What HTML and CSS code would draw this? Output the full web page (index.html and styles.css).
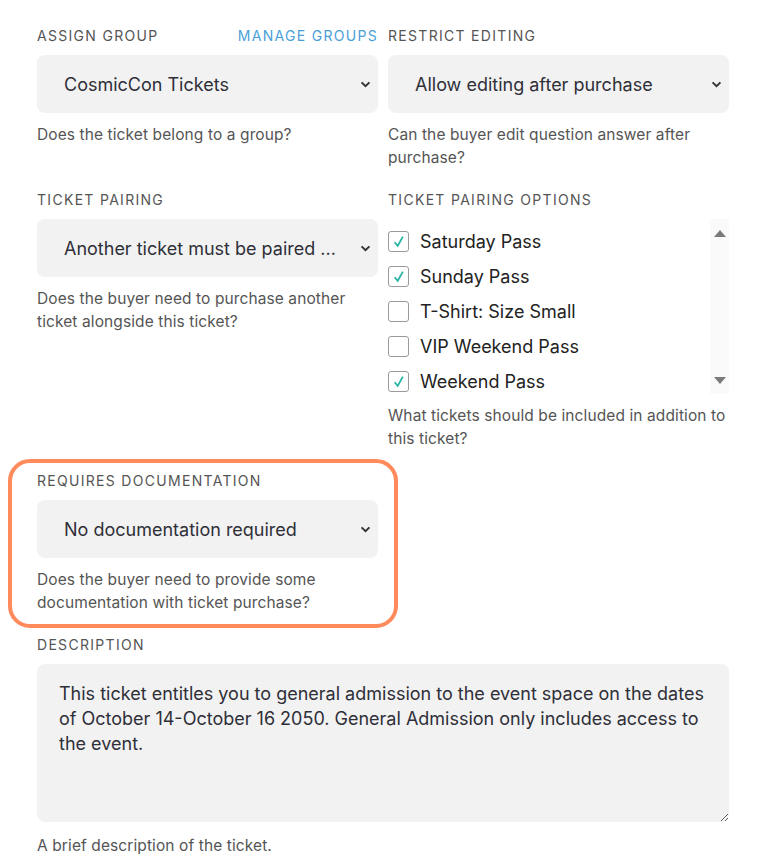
FILE: index.html
```html
<!DOCTYPE html>
<html lang="en">
<head>
    <meta charset="UTF-8">
    <meta name="viewport" content="width=device-width, initial-scale=1.0">
    <title>Ticket settings</title>
    <link rel="stylesheet" href="styles.css">
</head>
<body>

<div class="form">
    <!-- Assign group -->
    <div class="field">
        <div class="label-row">
            <span class="label">Assign Group</span>
            <a class="link" href="#">Manage Groups</a>
        </div>
        <div class="select">CosmicCon Tickets</div>
        <p class="help">Does the ticket belong to a group?</p>
    </div>

    <!-- Restrict editing -->
    <div class="field">
        <div class="label-row">
            <span class="label">Restrict Editing</span>
        </div>
        <div class="select">Allow editing after purchase</div>
        <p class="help">Can the buyer edit question answer after purchase?</p>
    </div>

    <!-- Ticket pairing -->
    <div class="field">
        <div class="label-row">
            <span class="label">Ticket Pairing</span>
        </div>
        <div class="select">Another ticket must be paired ...</div>
        <p class="help">Does the buyer need to purchase another ticket alongside this ticket?</p>
    </div>

    <!-- Pairing options -->
    <div class="field">
        <div class="label-row">
            <span class="label">Ticket Pairing Options</span>
        </div>
        <div class="checklist">
            <ul class="options">
                <li class="option checked"><span class="box"></span>Saturday Pass</li>
                <li class="option checked"><span class="box"></span>Sunday Pass</li>
                <li class="option"><span class="box"></span>T-Shirt: Size Small</li>
                <li class="option"><span class="box"></span>VIP Weekend Pass</li>
                <li class="option checked"><span class="box"></span>Weekend Pass</li>
            </ul>
            <div class="scrollbar">
                <span class="arrow up"></span>
                <span class="arrow down"></span>
            </div>
        </div>
        <p class="help">What tickets should be included in addition to this ticket?</p>
    </div>

    <!-- Requires documentation (highlighted) -->
    <div class="field highlight">
        <div class="label-row">
            <span class="label">Requires Documentation</span>
        </div>
        <div class="select">No documentation required</div>
        <p class="help">Does the buyer need to provide some documentation with ticket purchase?</p>
    </div>
    <div></div>

    <!-- Description -->
    <div class="field wide">
        <div class="label-row">
            <span class="label">Description</span>
        </div>
        <textarea class="textarea">This ticket entitles you to general admission to the event space on the dates of October 14-October 16 2050. General Admission only includes access to the event.</textarea>
        <p class="help">A brief description of the ticket.</p>
    </div>
</div>

</body>
</html>
```

FILE: styles.css
```css
* {
    box-sizing: border-box;
}
body {
    margin: 0;
    background-color: #fff;
    font-family: Inter, "Noto Sans", sans-serif;
    color: #333;
}
.form {
    width: 692px;
    margin-left: 37px;
    padding-top: 25px;
    display: grid;
    grid-template-columns: 1fr 1fr;
    column-gap: 10px;
    row-gap: 20px;
}
.field.wide {
    grid-column: span 2;
}
.label-row {
    display: flex;
    justify-content: space-between;
    align-items: center;
    height: 20px;
    margin-bottom: 10px;
}
.label {
    font-size: 14px;
    letter-spacing: 1.3px;
    text-transform: uppercase;
    color: #555;
}
.link {
    font-size: 14px;
    letter-spacing: 1.3px;
    text-transform: uppercase;
    color: #4a9fd8;
    text-decoration: none;
}
.select {
    height: 58px;
    line-height: 60px;
    padding: 0 40px 0 27px;
    background-color: #f2f2f2;
    border-radius: 8px;
    font-size: 18px;
    color: #2f2f38;
    white-space: nowrap;
    overflow: hidden;
    background-image: url("data:image/svg+xml,%3Csvg xmlns='http://www.w3.org/2000/svg' width='12' height='8' viewBox='0 0 12 8'%3E%3Cpath d='M1.5 1.5 6 6 10.5 1.5' fill='none' stroke='%23333' stroke-width='2.2'/%3E%3C/svg%3E");
    background-repeat: no-repeat;
    background-position: right 7px center;
    background-size: 11px 7px;
}
.help {
    margin: 10px 0 0;
    font-size: 15.5px;
    letter-spacing: 0.1px;
    line-height: 23px;
    color: #555;
}
.wide .help {
    margin-top: 12px;
}
.checklist {
    display: flex;
    height: 175px;
    overflow: hidden;
}
.options {
    flex: 1;
    list-style: none;
    margin: 0;
    padding: 5px 0 0;
}
.option {
    display: flex;
    align-items: center;
    height: 35px;
    font-size: 18px;
    color: #222;
}
.box {
    width: 21px;
    height: 21px;
    margin-right: 11px;
    border: 1px solid #9a9a9a;
    border-radius: 3px;
    background-color: #fff;
}
.option.checked .box {
    background-image: url("data:image/svg+xml,%3Csvg xmlns='http://www.w3.org/2000/svg' width='20' height='20' viewBox='0 0 20 20'%3E%3Cpath d='M6 10.5 9 14 14 5' fill='none' stroke='%232bb5a8' stroke-width='1.8'/%3E%3C/svg%3E");
    background-repeat: no-repeat;
    background-position: center;
}
.scrollbar {
    width: 19px;
    background-color: #fafafa;
    display: flex;
    flex-direction: column;
    justify-content: space-between;
    align-items: center;
    padding: 11px 0 10px;
}
.arrow {
    width: 0;
    height: 0;
    border-left: 6px solid transparent;
    border-right: 6px solid transparent;
}
.arrow.up {
    border-bottom: 7px solid #7a7a7a;
}
.arrow.down {
    border-top: 7px solid #7a7a7a;
}
.highlight {
    margin: -11px -20px -14px -29px;
    padding: 7px 16px 10px 25px;
    border: 4px solid #ff8a5c;
    border-radius: 22px;
}
.textarea {
    display: block;
    width: 100%;
    height: 158px;
    margin: 0;
    padding: 17px 22px;
    border: none;
    border-radius: 8px;
    background-color: #f2f2f2;
    font-family: inherit;
    font-size: 18px;
    line-height: 25px;
    color: #2f2f38;
    resize: vertical;
    outline: none;
}
```
